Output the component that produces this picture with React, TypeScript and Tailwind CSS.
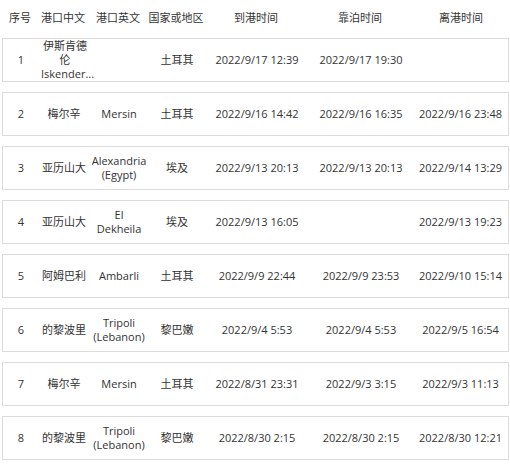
const rows = [
  ["1", "伊斯肯德伦", "Iskender...", "土耳其", "2022/9/17 12:39", "2022/9/17 19:30", ""],
  ["2", "梅尔辛", "Mersin", "土耳其", "2022/9/16 14:42", "2022/9/16 16:35", "2022/9/16 23:48"],
  ["3", "亚历山大", "Alexandria (Egypt)", "埃及", "2022/9/13 20:13", "2022/9/13 20:13", "2022/9/14 13:29"],
  ["4", "亚历山大", "El\nDekheila", "埃及", "2022/9/13 16:05", "", "2022/9/13 19:23"],
  ["5", "阿姆巴利", "Ambarli", "土耳其", "2022/9/9 22:44", "2022/9/9 23:53", "2022/9/10 15:14"],
  ["6", "的黎波里", "Tripoli (Lebanon)", "黎巴嫩", "2022/9/4 5:53", "2022/9/4 5:53", "2022/9/5 16:54"],
  ["7", "梅尔辛", "Mersin", "土耳其", "2022/8/31 23:31", "2022/9/3 3:15", "2022/9/3 11:13"],
  ["8", "的黎波里", "Tripoli (Lebanon)", "黎巴嫩", "2022/8/30 2:15", "2022/8/30 2:15", "2022/8/30 12:21"],
];
const widths = ["w-[36px]", "w-[50px]", "w-[60px]", "w-[56px]", "w-[104px]", "w-[104px]", "flex-1"];
const heads = ["序号", "港口中文", "港口英文", "国家或地区", "到港时间", "靠泊时间", "离港时间"];

export default function App() {
  return (
    <div className="w-[510px] h-[469px] bg-white text-[11px] text-[#333] overflow-hidden" style={{ fontFamily: '"Open Sans","Noto Sans CJK SC",sans-serif' }}>
      <div className="flex h-[36px] items-center pl-[2px]">
        {heads.map((h, i) => (
          <div key={i} className={`${widths[i]} text-center whitespace-nowrap`}>{h}</div>
        ))}
      </div>
      <div className="flex flex-col gap-[10px] pt-[2px] pl-[2px] pr-[1px]">
        {rows.map((r, ri) => (
          <div key={ri} className="flex h-[44px] items-center border border-[#dcdcdc] leading-[14px]">
            {r.map((c, i) => (
              <div key={i} className={`${widths[i]} text-center whitespace-pre-line ${i === 1 && ri === 0 ? "whitespace-nowrap pl-[2px]" : ""}`}>
                {i === 1 && ri === 0 ? <span>伊斯肯德伦Iskender...</span> : i === 2 && ri === 0 ? "" : c}
              </div>
            ))}
          </div>
        ))}
      </div>
    </div>
  );
}
